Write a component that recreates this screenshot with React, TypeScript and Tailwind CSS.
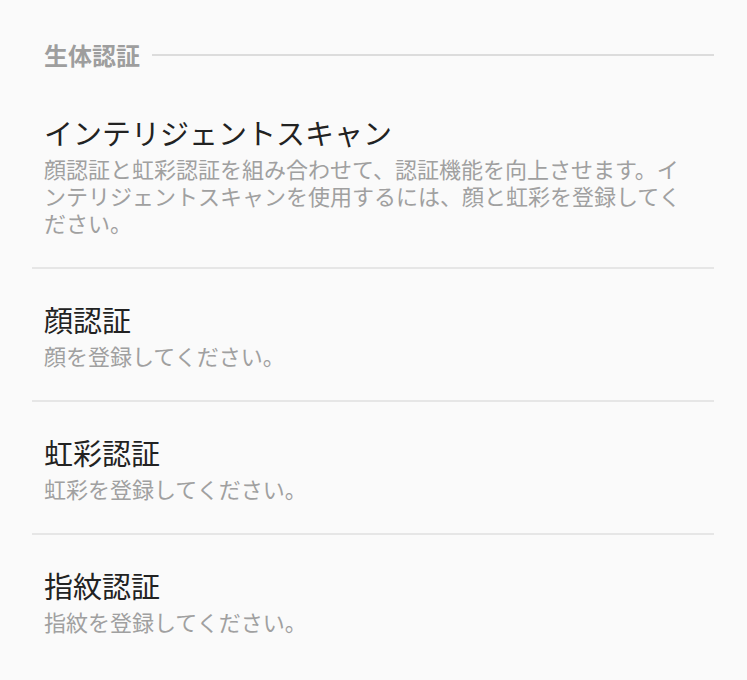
const items = [
  {
    title: "インテリジェントスキャン",
    desc: "顔認証と虹彩認証を組み合わせて、認証機能を向上させます。インテリジェントスキャンを使用するには、顔と虹彩を登録してください。",
  },
  { title: "顔認証", desc: "顔を登録してください。" },
  { title: "虹彩認証", desc: "虹彩を登録してください。" },
  { title: "指紋認証", desc: "指紋を登録してください。" },
];

export default function App() {
  return (
    <div
      className="min-h-[680px] w-full bg-[#fafafa] pl-[32px] pr-[33px]"
      style={{ fontFamily: '"Noto Sans CJK JP", "Noto Sans", sans-serif' }}
    >
      <div className="flex items-center pl-[12px] pt-[39px] pb-[11px] h-[82px] box-border">
        <span className="text-[24px] leading-[32px] font-bold text-[#9e9e9e]">生体認証</span>
        <div className="ml-[12px] flex-1 h-[2px] bg-[#dcdcdc]" />
      </div>

      {items.map((item, i) => (
        <div
          key={item.title}
          className={`pl-[12px] pr-[20px] pt-[30px] pb-[31px] ${i < items.length - 1 ? "border-b-2 border-[#e6e6e6]" : ""}`}
        >
          <div className="text-[29px] leading-[40px] text-[#222222]">{item.title}</div>
          <div className="mt-[3px] text-[22px] leading-[27px] text-[#a0a0a0]">{item.desc}</div>
        </div>
      ))}
    </div>
  );
}
